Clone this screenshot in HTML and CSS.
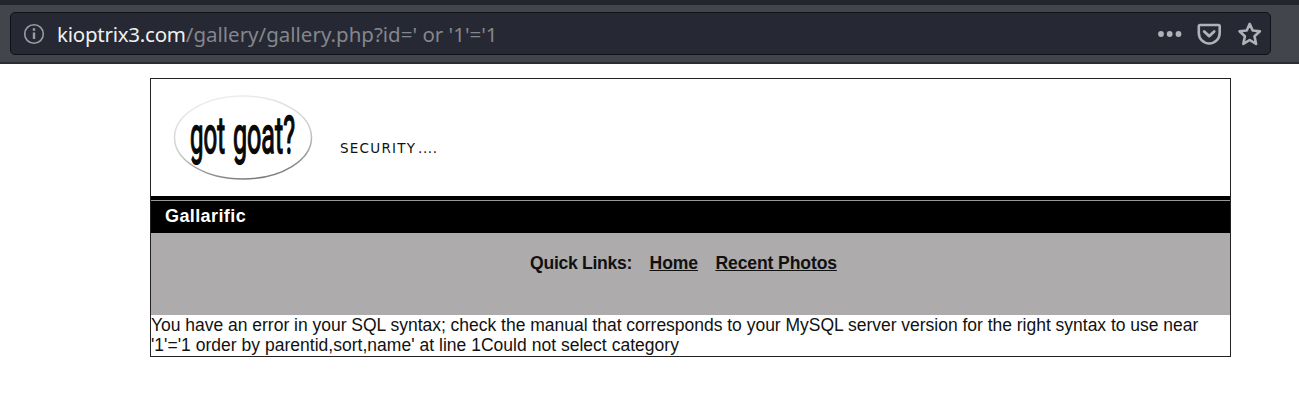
FILE: index.html
```html
<!DOCTYPE html>
<html lang="en">
<head>
<meta charset="utf-8">
<title>Gallarific</title>
<link rel="stylesheet" href="styles.css">
</head>
<body>
<header class="toolbar">
  <div class="urlbar">
    <svg class="info" viewBox="0 0 22 22" width="22" height="22"><circle cx="11" cy="11" r="9.3" fill="none" stroke="currentColor" stroke-width="1.6"/><path d="M11 9.5v6.500M11 5.200v2.500" stroke="currentColor" stroke-width="2.400"/></svg>
    <div class="url"><span class="host">kioptrix3.com</span><span class="path">/gallery/gallery.php?id=' or '1'='1</span></div>
    <svg class="actions" viewBox="0 0 110 30" width="110" height="30">
      <g fill="currentColor"><circle cx="5" cy="15" r="2.900"/><circle cx="13.700" cy="15" r="2.900"/><circle cx="22.500" cy="15" r="2.900"/></g>
      <g fill="none" stroke="currentColor" stroke-width="2.600" stroke-linejoin="round" stroke-linecap="round">
        <path d="M44 6h18.500q1.200 0 1.200 1.200v6.800a10.400 10.400 0 0 1-20.900 0V7.200Q42.800 6 44 6Z"/>
        <path d="M48.200 12.500l5 4.600 5-4.600" stroke-width="2.800"/>
        <path d="M93.700 4.900l3 6.600 7.200.8-5.400 4.900 1.600 7.700-6.400-3.900-6.400 3.900 1.600-7.700-5.400-4.900 7.200-.8Z"/>
      </g>
    </svg>
  </div>
</header>
<main class="page">
  <div class="banner">
    <svg width="320" height="116" viewBox="151 79 320 116">
      <defs><linearGradient id="rim" x1="0.350" y1="0" x2="0.650" y2="1"><stop offset="0" stop-color="#eee"/><stop offset=".55" stop-color="#ccc"/><stop offset="1" stop-color="#777"/></linearGradient></defs>
      <ellipse cx="243" cy="137.500" rx="68.500" ry="41.500" fill="#fff" stroke="url(#rim)" stroke-width="1.500"/>
      <g class="logo"><text transform="translate(190 152.500) scale(1 2.750)" textLength="35" lengthAdjust="spacingAndGlyphs">got</text><text transform="translate(233 152.500) scale(1 2.750)" textLength="62" lengthAdjust="spacingAndGlyphs">goat?</text></g>
      <text class="tagline" x="340" y="153" textLength="75">SECURITY</text>
      <text class="tagline" x="418" y="153" textLength="19">....</text>
    </svg>
  </div>
  <h1 class="title">Gallarific</h1>
  <nav class="links"><span class="label">Quick Links:</span><a href="#">Home</a><a href="#">Recent Photos</a></nav>
  <p class="error">You have an error in your SQL syntax; check the manual that corresponds to your MySQL server version for the right syntax to use near<br><span class="detail">'1'='1 order by parentid,sort,name' at line 1Could not select category</span></p>
</main>
</body>
</html>
```

FILE: styles.css
```css
* { box-sizing: border-box; }
body { margin: 0; background: #fff; color: #111; font-family: "Liberation Sans", Arial, sans-serif; }
.toolbar { height: 64px; padding: 7px 28px 7px 10px; background: #42454c; border-top: 5px solid #22252e; border-bottom: 2px solid #2b2d35; }
.urlbar { display: flex; align-items: center; height: 43px; padding: 0 4.500px 0 12px; background: #262933; border: 1px solid #0f1119; border-radius: 5px; color: #b1b2b8; }
.info { color: #9b9ca2; }
.url { flex: 1; margin-left: 12px; padding-top: 1px; white-space: pre; font: 20.500px/28px "Noto Sans", sans-serif; }
.host { color: #f0f0f2; letter-spacing: -.24px; }
.path { color: #85868d; letter-spacing: 0; }
.page { width: 1081px; height: 279px; margin: 14px 0 0 150px; border: 1.500px solid #222; }
.banner { height: 117px; }
.banner svg { display: block; }
.logo { font: 400 19px Roboto, sans-serif; fill: #080808; stroke: #080808; stroke-width: 1.200px; }
.logo text { vector-effect: non-scaling-stroke; }
.tagline { font: 13.500px "DejaVu Sans", sans-serif; fill: #111; }
.title { height: 37px; margin: 0; padding: 0 14px; border-top: 3px solid #000; background: linear-gradient(#000 0 1px, #999 1px 2px, #000 2px); color: #fff; font-size: 18px; line-height: 34px; letter-spacing: .4px; }
.links { display: flex; justify-content: center; height: 82px; padding: 20px 14px 0 0; gap: 17.500px; background: #adabab; color: #111; font-size: 17.600px; font-weight: bold; line-height: 20px; letter-spacing: -.13px; }
.label { letter-spacing: -.3px; }
.links a { color: inherit; text-decoration: underline; }
.error { margin: 0; font-size: 17.500px; line-height: 20px; letter-spacing: -.017px; white-space: nowrap; }
.detail { letter-spacing: .02px; }
```
